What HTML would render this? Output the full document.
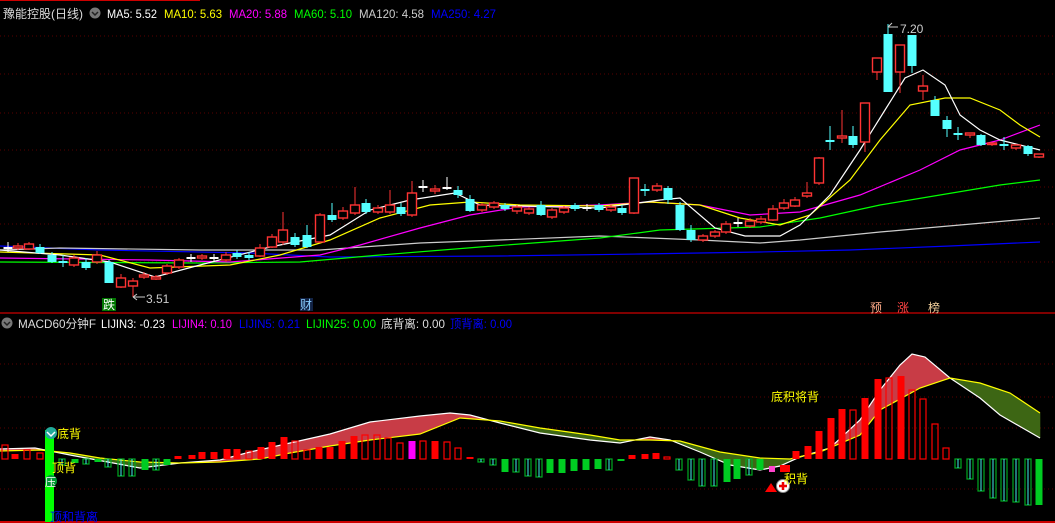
<!DOCTYPE html>
<html><head><meta charset="utf-8"><style>
html,body{margin:0;padding:0;background:#000;width:1055px;height:523px;overflow:hidden}
svg{display:block}
text{font-family:"Liberation Sans","Noto Sans CJK SC",sans-serif}
</style></head><body>
<svg id="s" width="1055" height="523" viewBox="0 0 1055 523" xmlns="http://www.w3.org/2000/svg">
<rect width="1055" height="523" fill="#000"/>
<line x1="0" y1="0.5" x2="200" y2="0.5" stroke="#c00"/>
<g stroke="#5a0000" stroke-dasharray="1 3">
<line x1="0" y1="36" x2="1055" y2="36"/><line x1="0" y1="74" x2="1055" y2="74"/><line x1="0" y1="113" x2="1055" y2="113"/><line x1="0" y1="150" x2="1055" y2="150"/><line x1="0" y1="187" x2="1055" y2="187"/><line x1="0" y1="224" x2="1055" y2="224"/><line x1="0" y1="262" x2="1055" y2="262"/>
<line x1="0" y1="364" x2="1055" y2="364"/><line x1="0" y1="397" x2="1055" y2="397"/><line x1="0" y1="428" x2="1055" y2="428"/><line x1="0" y1="489" x2="1055" y2="489"/>
</g>
<line x1="0" y1="313" x2="1055" y2="313" stroke="#a00" stroke-width="1.5"/>
<line x1="0" y1="522" x2="1055" y2="522" stroke="#c00" stroke-width="2"/>
<g id="ma"></g><g id="cd"></g><g id="mc"></g><g id="hist"></g>
<g font-size="12" lengthAdjust="spacingAndGlyphs">
<text x="3" y="18" fill="#ddd" textLength="80" lengthAdjust="spacingAndGlyphs">豫能控股(日线)</text>
<text x="107" y="18" fill="#fff" textLength="50" lengthAdjust="spacingAndGlyphs">MA5: 5.52</text>
<text x="164" y="18" fill="#ff0" textLength="58" lengthAdjust="spacingAndGlyphs">MA10: 5.63</text>
<text x="229" y="18" fill="#f0f" textLength="58" lengthAdjust="spacingAndGlyphs">MA20: 5.88</text>
<text x="294" y="18" fill="#0f0" textLength="58" lengthAdjust="spacingAndGlyphs">MA60: 5.10</text>
<text x="359" y="18" fill="#ccc" textLength="65" lengthAdjust="spacingAndGlyphs">MA120: 4.58</text>
<text x="431" y="18" fill="#00f" textLength="65" lengthAdjust="spacingAndGlyphs">MA250: 4.27</text>
<text x="18" y="328" fill="#ddd" textLength="78" lengthAdjust="spacingAndGlyphs">MACD60分钟F</text>
<text x="101" y="328" fill="#fff" textLength="64" lengthAdjust="spacingAndGlyphs">LIJIN3: -0.23</text>
<text x="172" y="328" fill="#f0f" textLength="60" lengthAdjust="spacingAndGlyphs">LIJIN4: 0.10</text>
<text x="239" y="328" fill="#00f" textLength="61" lengthAdjust="spacingAndGlyphs">LIJIN5: 0.21</text>
<text x="306" y="328" fill="#0f0" textLength="70" lengthAdjust="spacingAndGlyphs">LIJIN25: 0.00</text>
<text x="381" y="328" fill="#ddd" textLength="64" lengthAdjust="spacingAndGlyphs">底背离: 0.00</text>
<text x="450" y="328" fill="#00f" textLength="62" lengthAdjust="spacingAndGlyphs">顶背离: 0.00</text>
</g>
<circle cx="95" cy="13" r="5.5" fill="#777"/><path d="M92 12l3 3 3-3" stroke="#222" stroke-width="1.5" fill="none"/>
<circle cx="7" cy="323" r="5.5" fill="#777"/><path d="M4 322l3 3 3-3" stroke="#222" stroke-width="1.5" fill="none"/>
<rect x="102" y="298" width="14" height="13" fill="#070"/><text x="103" y="309" font-size="12" fill="#fff">跌</text>
<rect x="300" y="298" width="13" height="13" fill="#124"/><text x="300" y="309" font-size="12" fill="#8cf">财</text>
<text x="870" y="312" font-size="12" fill="#fa8">预</text>
<text x="897" y="312" font-size="12" fill="#f44">涨</text>
<text x="928" y="312" font-size="12" fill="#ec9">榜</text>
<path d="M133 297h12M133 297l4-3M133 297l4 3" stroke="#ccc" fill="none"/>
<text x="146" y="303" font-size="12" fill="#ccc">3.51</text>
<path d="M888 27l4-4M888 27h10" stroke="#ccc" fill="none"/>
<text x="900" y="33" font-size="12" fill="#ccc">7.20</text>
<text x="771" y="401" font-size="12" fill="#ff0">底积将背</text>
<rect x="45" y="430" width="9" height="92" fill="#0f0"/>
<circle cx="51" cy="433" r="6" fill="#2a9"/><path d="M47 432l4 4 4-4" stroke="#fff" stroke-width="1.5" fill="none"/>
<text x="57" y="438" font-size="12" fill="#ff0">底背</text>
<text x="52" y="472" font-size="12" fill="#ff0">顶背</text>
<circle cx="51" cy="481" r="6" fill="#093"/><text x="45" y="486" font-size="11" fill="#fff">压</text>
<text x="50" y="521" font-size="12" fill="#00f">顶和背离</text>
<rect x="769" y="466" width="6" height="6" fill="#f4c"/>
<rect x="780" y="465" width="10" height="7" fill="#f00"/>
<path d="M765 492l6-9 6 9z" fill="#f00"/>
<circle cx="783" cy="486" r="6.5" fill="#fff" stroke="#888"/><path d="M779 486h8M783 482v8" stroke="#e00" stroke-width="2.5"/>
<text x="784" y="483" font-size="12" fill="#ff0">积背</text>
</svg>
<script>
var NS="http://www.w3.org/2000/svg";
function el(p,t,a){var e=document.createElementNS(NS,t);for(var k in a)e.setAttribute(k,a[k]);document.getElementById(p).appendChild(e);return e;}
function pl(p,pts,c){el(p,"polyline",{points:pts.map(function(q){return q.join(",")}).join(" "),fill:"none",stroke:c,"stroke-width":1.2});}
var C=[[8,247,249,"w",242,252],[18,246,248,"r",243,250],[29,244,249,"r",242,250],[40,247,253,"c",244,254],[52,255,262,"c",252,263],[63,261,263,"c",255,267],[74,258,265,"r",255,267],[86,262,268,"c",258,270],[97,255,262,"r",251,264],[109,262,283,"c",260,283],[121,278,287,"r",274,288],[133,281,286,"r",278,297],[144,275,277,"r",272,279],[156,277,279,"r",275,280],[167,266,273,"r",264,275],[179,260,267,"r",258,269],[191,257,259,"w",254,262],[202,256,258,"r",254,260],[214,257,259,"w",254,262],[226,255,260,"r",252,262],[237,253,257,"c",250,259],[249,255,258,"c",252,260],[260,248,256,"r",244,257],[272,237,247,"r",234,248],[283,230,242,"r",212,245],[295,237,245,"c",233,247],[307,235,247,"c",225,248],[320,215,242,"r",213,243],[332,215,220,"c",203,222],[343,211,218,"r",207,220],[355,205,213,"r",187,215],[366,203,212,"c",199,214],[378,208,212,"r",205,214],[390,205,212,"r",190,214],[401,207,214,"c",203,216],[412,193,215,"r",181,217],[423,186,188,"w",180,192],[435,189,191,"r",185,194],[447,187,189,"w",177,190],[458,190,195,"c",186,198],[470,199,211,"c",195,212],[482,205,210,"r",203,212],[494,203,207,"r",201,209],[505,205,209,"c",203,211],[517,207,211,"r",205,214],[529,209,213,"r",207,215],[541,205,215,"c",201,216],[552,210,217,"r",208,219],[564,208,212,"r",206,214],[575,205,209,"c",203,211],[587,207,209,"w",204,211],[599,205,210,"c",203,212],[611,207,210,"r",205,212],[622,208,213,"c",205,215],[634,178,213,"r",178,214],[645,189,191,"c",184,196],[657,186,190,"r",183,192],[668,188,200,"c",186,204],[680,205,230,"c",202,231],[691,230,240,"c",225,242],[703,236,240,"r",234,242],[715,232,236,"r",230,238],[726,224,232,"r",221,234],[738,222,224,"w",218,227],[750,221,226,"r",218,228],[761,219,222,"r",216,224],[773,209,220,"r",205,221],[784,203,208,"r",199,210],[795,200,206,"r",197,207],[807,193,196,"r",182,198],[819,158,183,"r",157,185],[830,140,142,"c",126,150],[842,136,138,"r",110,143],[853,136,145,"c",126,148],[865,103,142,"r",103,152],[877,58,72,"r",58,80],[888,34,92,"c",24,92],[900,45,72,"r",45,93],[912,35,66,"c",35,73],[923,86,91,"r",75,100],[935,100,116,"c",96,116],[947,120,129,"c",116,137],[958,133,135,"c",127,140],[970,133,135,"r",133,138],[981,135,145,"c",134,146],[992,143,144,"r",143,146],[1004,144,146,"c",137,150],[1016,145,148,"r",144,150],[1028,146,154,"c",145,156],[1039,154,157,"r",154,158]];
var col={r:"#f33",c:"#5ff",w:"#fff"};
C.forEach(function(d){var x=d[0],c=col[d[3]];
 el("cd","line",{x1:x,y1:d[4],x2:x,y2:d[5],stroke:c});
 var h=Math.max(d[2]-d[1],1.5);
 if(d[3]=="r")el("cd","rect",{x:x-4.5,y:d[1],width:9,height:h,fill:"#000",stroke:c,"stroke-width":1.4});
 else el("cd","rect",{x:x-4.5,y:d[1],width:9,height:h,fill:c});});
pl("ma",[[0,246],[100,250],[250,253],[330,257],[500,256],[640,254],[760,252],[850,250],[950,246],[1040,242]],"#00f");
pl("ma",[[0,250],[60,248],[200,250],[320,250],[420,243],[500,240],[600,236],[700,240],[760,243],[800,240],[880,232],[960,225],[1040,218]],"#ccc");
pl("ma",[[0,262],[200,263],[300,262],[380,255],[480,247],[600,238],[660,230],[760,227],[820,218],[880,205],[940,195],[1000,185],[1040,180]],"#0f0");
pl("ma",[[0,258],[150,260],[230,262],[320,255],[360,245],[420,228],[470,215],[520,207],[600,205],[650,202],[700,205],[750,215],[800,212],[860,195],[920,170],[960,150],[1000,140],[1040,125]],"#f0f");
pl("ma",[[0,252],[100,255],[150,268],[230,265],[280,255],[330,240],[380,218],[430,205],[470,202],[520,205],[600,206],[650,202],[700,205],[740,218],[780,225],[810,215],[850,180],[880,140],[910,105],[945,98],[970,98],[1000,110],[1020,125],[1040,137]],"#ff0");
pl("ma",[[0,250],[60,255],[110,262],[155,277],[200,265],[270,247],[330,235],[370,210],[410,200],[455,193],[480,205],[600,208],[660,200],[680,198],[715,228],[745,236],[780,236],[800,225],[830,195],[860,150],[885,110],[905,78],[923,70],[945,85],[960,115],[980,130],[1000,140],[1040,150]],"#fff");
var W=[[0,449],[35,448],[70,455],[140,468],[180,463],[220,460],[250,452],[290,443],[330,434],[370,422],[420,416],[450,413],[470,415],[500,423],[540,433],[590,440],[620,443],[650,437],[670,440],[700,452],[730,465],[760,470],[780,466],[800,457],[830,448],[860,420],[880,390],[900,365],[912,354],[925,357],[950,378],[980,398],[1000,415],[1040,438]];
var Y=[[0,451],[40,450],[70,453],[100,458],[140,462],[180,463],[220,462],[260,459],[290,453],[330,446],[370,440],[420,434],[460,418],[500,421],[540,428],[590,435],[620,440],[650,440],[680,441],[720,452],[760,458],[790,459],[820,452],[860,435],[880,410],[920,388],[950,378],[980,383],[1010,393],[1040,413]];
function it(a,x){for(var i=0;i<a.length-1;i++){if(x>=a[i][0]&&x<=a[i+1][0]){var t=(x-a[i][0])/(a[i+1][0]-a[i][0]);return a[i][1]+t*(a[i+1][1]-a[i][1]);}}return a[a.length-1][1];}
for(var x=0;x<1040;x+=2){var w1=it(W,x),w2=it(W,x+2),y1=it(Y,x),y2=it(Y,x+2);
 el("mc","polygon",{points:x+","+w1+" "+(x+2.3)+","+w2+" "+(x+2.3)+","+y2+" "+x+","+y1,fill:(w1+w2<y1+y2)?"#c83c46":"#3d6614"});}
pl("mc",W,"#fff");pl("mc",Y,"#ff0");
var Z=459;
var H=[[5,445,"h"],[15,454,"f"],[27,450,"h"],[40,453,"h"],[62,465,"h"],[75,463,"f"],[86,464,"h"],[98,462,"f"],[108,467,"h"],[121,476,"h"],[132,476,"h"],[145,470,"f"],[156,470,"h"],[167,465,"f"],[178,456,"f"],[192,455,"f"],[202,452,"f"],[214,452,"f"],[227,449,"f"],[237,449,"f"],[249,451,"h"],[261,447,"f"],[272,442,"f"],[284,437,"f"],[295,441,"h"],[307,450,"h"],[319,447,"f"],[330,447,"f"],[342,441,"f"],[354,436,"f"],[365,435,"h"],[377,435,"h"],[388,438,"h"],[400,443,"h"],[412,441,"m"],[423,441,"h"],[435,441,"f"],[447,442,"h"],[458,448,"h"],[470,457,"f"],[481,462,"h"],[493,465,"h"],[505,472,"f"],[516,472,"h"],[528,476,"h"],[539,477,"h"],[550,473,"f"],[562,473,"f"],[574,471,"f"],[586,470,"f"],[598,469,"f"],[609,470,"h"],[621,461,"f"],[632,455,"f"],[645,454,"f"],[656,453,"f"],[667,457,"h"],[679,470,"h"],[691,480,"h"],[702,486,"h"],[714,486,"h"],[727,482,"f"],[737,479,"f"],[749,475,"h"],[760,470,"f"],[796,451,"f"],[808,446,"f"],[819,431,"f"],[831,418,"f"],[842,409,"f"],[853,410,"h"],[865,398,"f"],[878,379,"f"],[889,378,"h"],[901,376,"f"],[912,390,"h"],[923,399,"h"],[935,424,"h"],[946,448,"h"],[958,468,"h"],[970,479,"h"],[981,491,"h"],[993,498,"h"],[1004,501,"h"],[1016,502,"h"],[1028,505,"h"],[1039,505,"f"]];
H.forEach(function(d){var x=d[0],y=d[1],up=y<Z,t=Math.min(y,Z),h=Math.abs(y-Z)||1,c=up?"#f00":"#0a2";
 if(d[2]=="m")el("hist","rect",{x:x-3.5,y:t,width:7,height:h,fill:"#f0f"});
 else if(d[2]=="f")el("hist","rect",{x:x-3.5,y:t,width:7,height:h,fill:up?"#f00":"#0c2"});
 else{el("hist","rect",{x:x-3,y:t,width:6,height:h,fill:"none",stroke:c,"stroke-width":1.2});
  if(!up)el("hist","line",{x1:x,y1:t,x2:x,y2:t+h,stroke:"#4ee"});}
});
</script>
</body></html>
